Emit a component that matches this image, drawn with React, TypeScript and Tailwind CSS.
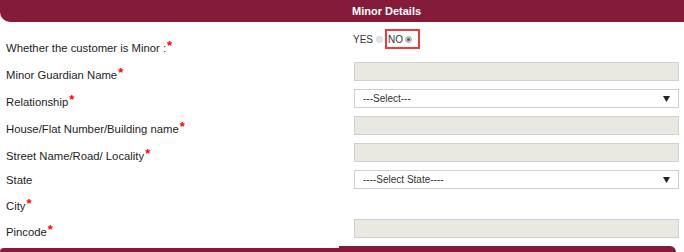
import React from "react";

const Label = ({ text, req, pt }: { text: string; req?: boolean; pt: string }) => (
  <div className={`pl-[6px] ${pt} text-[11.3px] leading-[14px] text-[#1e1e1e]`}>
    {text}
    {req && <span className="text-[#ff0000] text-[13px] font-bold relative top-[-2px] ml-[1px] leading-[10px]">*</span>}
  </div>
);

const Input = () => (
  <div className="w-[325px] h-[19px] bg-[#e9e8e1] border border-[#d0d0d0]" />
);

const Select = ({ text }: { text: string }) => (
  <div className="w-[325px] h-[19px] bg-white border border-[#cfcfcf] flex items-center justify-between pl-[8px] pr-[8px] text-[10px] text-[#333]">
    <span>{text}</span>
    <svg width="7" height="6" viewBox="0 0 7 6">
      <path d="M0 0 H7 L3.5 6 Z" fill="#222" />
    </svg>
  </div>
);

export default function App() {
  return (
    <div className="w-[684px] h-[252px] bg-white overflow-hidden font-['Liberation_Sans',Arial,sans-serif]">
      <div className="h-[22px] bg-[#841b3b] rounded-bl-[10px] text-white text-[11px] font-bold leading-[22px] pl-[352px]">
        Minor Details
      </div>

      <div className="grid grid-cols-[354px_330px]">
        {/* Row 0 */}
        <div className="h-[40px]">
          <Label text="Whether the customer is Minor :" req pt="pt-[19px]" />
        </div>
        <div className="h-[40px] pt-[7px]">
          <div className="flex items-center h-[20px] ml-[-1px] text-[10px] text-[#333]">
            <span>YES</span>
            <span className="ml-[3px] w-[7px] h-[7px] rounded-full bg-[#e4e4e4] border border-[#d6d6d6]" />
            <div className="ml-[2px] h-[20px] w-[35px] border-2 border-[#ee3b3b] flex items-center pl-[1px]">
              <span className="text-[#333]">NO</span>
              <span className="ml-[2px] w-[7px] h-[7px] rounded-full bg-[#cfcfcf] border border-[#aaa] flex items-center justify-center">
                <span className="w-[3px] h-[3px] rounded-full bg-[#555]" />
              </span>
            </div>
          </div>
        </div>

        {/* Guardian */}
        <div className="h-[27px]">
          <Label text="Minor Guardian Name" req pt="pt-[6px]" />
        </div>
        <div className="h-[27px]">
          <Input />
        </div>

        {/* Relationship */}
        <div className="h-[27px]">
          <Label text="Relationship" req pt="pt-[6px]" />
        </div>
        <div className="h-[27px]">
          <Select text="---Select---" />
        </div>

        {/* House */}
        <div className="h-[27px]">
          <Label text="House/Flat Number/Building name" req pt="pt-[6px]" />
        </div>
        <div className="h-[27px]">
          <Input />
        </div>

        {/* Street */}
        <div className="h-[27px]">
          <Label text="Street Name/Road/ Locality" req pt="pt-[6px]" />
        </div>
        <div className="h-[27px]">
          <Input />
        </div>

        {/* State */}
        <div className="h-[27px]">
          <Label text="State" pt="pt-[3px]" />
        </div>
        <div className="h-[27px]">
          <Select text="----Select State----" />
        </div>

        {/* City */}
        <div className="h-[22px]">
          <Label text="City" req pt="pt-[2px]" />
        </div>
        <div className="h-[22px]" />

        {/* Pincode */}
        <div className="h-[27px]">
          <Label text="Pincode" req pt="pt-[6px]" />
        </div>
        <div className="h-[27px]">
          <Input />
        </div>
      </div>

      <div className="flex items-start">
        <div className="w-[339px] h-[4px] mt-[2px] bg-[#841b3b] rounded-tl-[4px]" />
        <div className="w-[337px] h-[6px] bg-[#841b3b] rounded-tr-[6px]" />
      </div>
    </div>
  );
}
